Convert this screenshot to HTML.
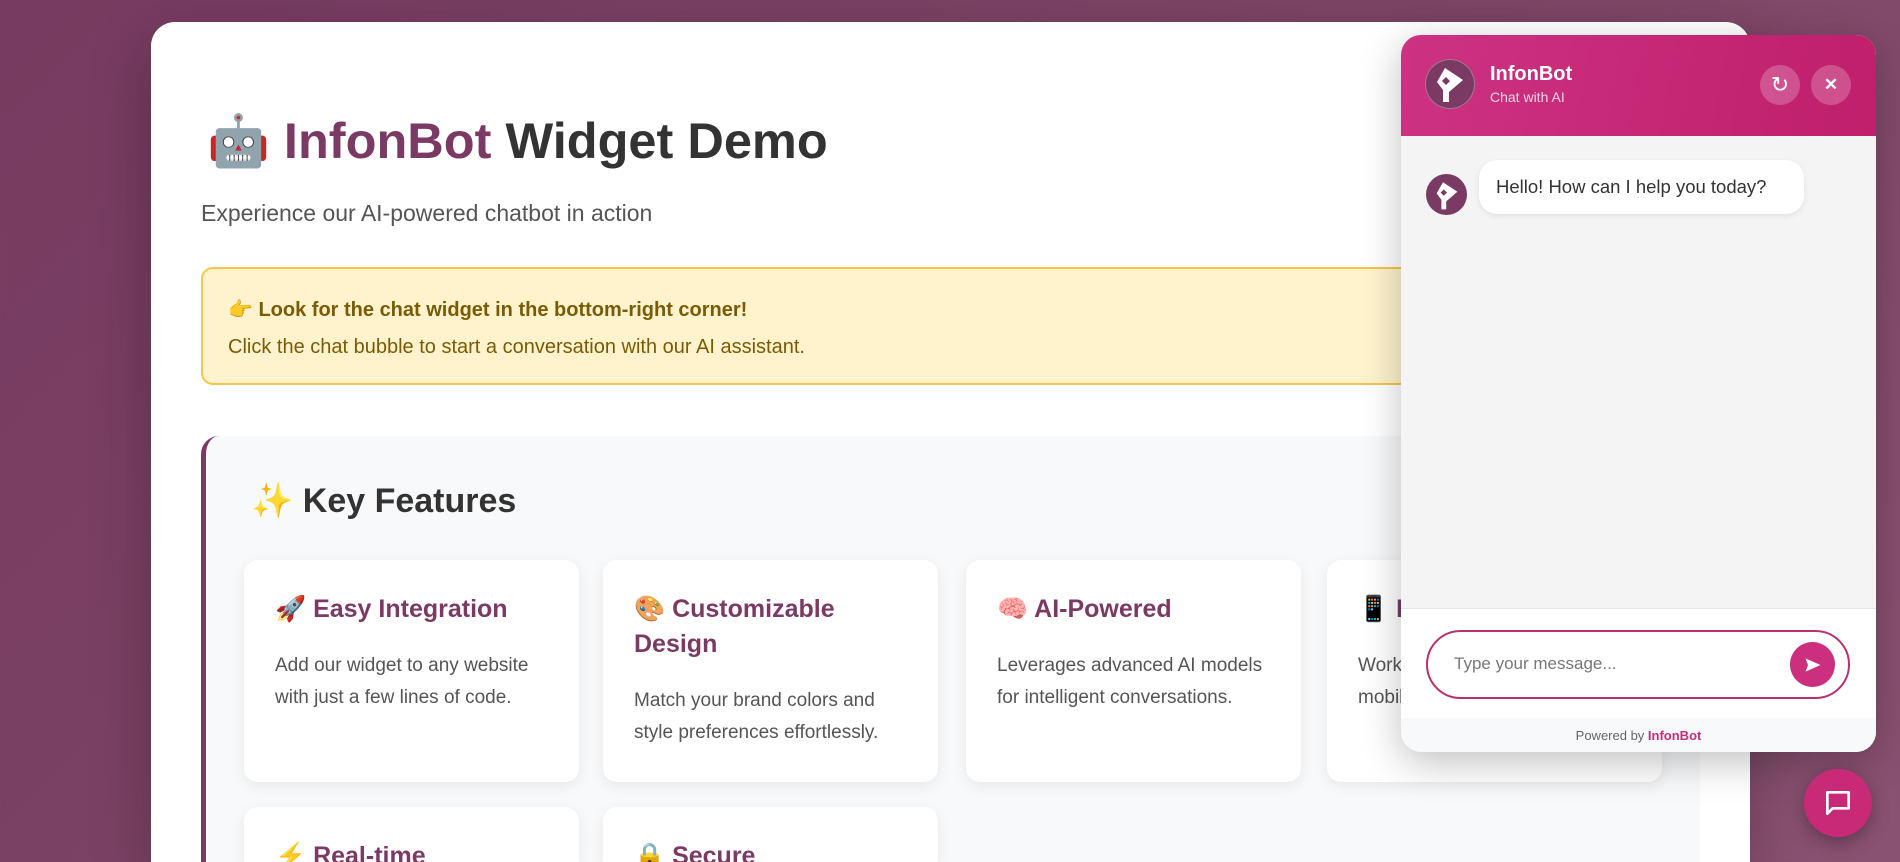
<!DOCTYPE html>
<html><head><meta charset="utf-8"><style>
*{box-sizing:border-box;margin:0;padding:0}
html,body{width:1900px;height:862px;overflow:hidden}
body{background:linear-gradient(135deg,#773a60 0%,#7d4566 50%,#8a5272 100%);font-family:"Segoe UI","Liberation Sans",sans-serif;position:relative}
.card{position:absolute;left:151px;top:22px;width:1599px;height:840px;background:#fff;border-radius:24px 24px 0 0;box-shadow:0 20px 60px rgba(0,0,0,.25);overflow:hidden}
h1{position:absolute;left:207px;top:111px;font-size:50.5px;font-weight:bold;color:#333;white-space:nowrap;font-family:"Liberation Sans",sans-serif}
h1 .b{color:#7b3a64}
.sub{position:absolute;left:201px;top:200px;font-size:23px;color:#555}
.note{position:absolute;left:201px;top:267px;width:1499px;height:118px;background:#fff3cd;border:2px solid #f2c649;border-radius:12px}
.note .t1{position:absolute;left:25px;top:28px;font-size:20px;font-weight:bold;color:#7a5b05}
.note .t2{position:absolute;left:25px;top:67px;font-size:20px;color:#7a5b05}
.feat{position:absolute;left:201px;top:436px;width:1499px;height:426px;background:#f8f9fa;border-left:5px solid #7b3a64;border-radius:18px 18px 0 0}
.feat h2{position:absolute;left:45px;top:45px;font-size:34px;font-weight:bold;color:#333}
.fc{position:absolute;width:335px;height:222px;background:#fff;border-radius:14px;box-shadow:0 4px 14px rgba(0,0,0,.07)}
.fc.r2{height:55px;border-radius:14px 14px 0 0}
.fc h3{position:absolute;left:31px;top:32px;width:290px;font-size:25px;line-height:35px;font-weight:bold;color:#7b3a64}
.fc p{position:absolute;left:31px;width:270px;font-size:19px;line-height:32px;color:#555}
.w{position:absolute;left:1401px;top:35px;width:475px;height:717px;border-radius:20px;background:#f4f4f5;box-shadow:0 10px 40px rgba(0,0,0,.25);overflow:hidden;font-family:"Liberation Sans",sans-serif}
.hd{position:absolute;left:0;top:0;width:475px;height:101px;background:linear-gradient(100deg,#cd3282,#bf1f6c)}
.av{position:absolute;border-radius:50%;background:#7b3a64;display:flex;align-items:center;justify-content:center}
.btn{position:absolute;width:40px;height:40px;border-radius:50%;background:rgba(255,255,255,.22);color:#fff;display:flex;align-items:center;justify-content:center;font-weight:bold}
.bub{position:absolute;left:78px;top:125px;width:325px;height:54px;background:#fff;border-radius:18px;box-shadow:0 2px 6px rgba(0,0,0,.08);font-size:18.5px;color:#333;padding:16px 0 0 17px}
.ia{position:absolute;left:0;top:573px;width:475px;height:110px;background:#fff;border-top:1px solid #e6e6e6}
.inp{position:absolute;left:25px;top:21px;width:424px;height:69px;border:2px solid #b8306e;border-radius:35px}
.inp span{position:absolute;left:26px;top:22px;font-size:17px;color:#777}
.send{position:absolute;right:13px;top:10px;width:45px;height:45px;border-radius:50%;background:#cc2f7d;display:flex;align-items:center;justify-content:center}
.ft{position:absolute;left:0;top:683px;width:475px;height:34px;background:#f8f9fa;text-align:center;font-size:13px;color:#666;padding-top:10px}
.fab{position:absolute;left:1804px;top:769px;width:68px;height:68px;border-radius:50%;background:#c92a77;box-shadow:0 6px 18px rgba(0,0,0,.3);display:flex;align-items:center;justify-content:center}
</style></head><body>
<div class="card"></div>
<h1>🤖 <span class="b">InfonBot</span> Widget Demo</h1>
<div class="sub">Experience our AI-powered chatbot in action</div>
<div class="note"><div class="t1">👉 Look for the chat widget in the bottom-right corner!</div><div class="t2">Click the chat bubble to start a conversation with our AI assistant.</div></div>
<div class="feat"><h2>✨ Key Features</h2></div>
<div class="fc" style="left:244px;top:560px"><h3>🚀 Easy Integration</h3><p style="top:90px;width:290px">Add our widget to any website with just a few lines of code.</p></div>
<div class="fc" style="left:603px;top:560px"><h3>🎨 Customizable Design</h3><p style="top:125px;width:262px">Match your brand colors and style preferences effortlessly.</p></div>
<div class="fc" style="left:966px;top:560px"><h3>🧠 AI-Powered</h3><p style="top:90px;width:280px">Leverages advanced AI models for intelligent conversations.</p></div>
<div class="fc" style="left:1327px;top:560px"><h3>📱 Responsive</h3><p style="top:90px;width:290px">Works on desktop, tablets and mobile devices.</p></div>
<div class="fc r2" style="left:244px;top:807px"><h3>⚡ Real-time</h3></div>
<div class="fc r2" style="left:603px;top:807px"><h3>🔒 Secure</h3></div>
<div class="w">
 <div class="hd">
  <div class="av" style="left:24px;top:24px;width:50px;height:50px;border:1px solid rgba(255,255,255,.3)"><svg width="30" height="36" viewBox="0 0 30 36"><path d="M10 2 L28 14 L14 26 L14 36 L8 36 L8 24 L2 16 Z M11 11 L7 15 L11 19 L15 15 Z" fill="#fff" fill-rule="evenodd"/></svg></div>
  <div style="position:absolute;left:89px;top:28px;color:#fff;font-size:20px;font-weight:bold">InfonBot</div>
  <div style="position:absolute;left:89px;top:54px;color:#f3d3e3;font-size:14px">Chat with AI</div>
  <div class="btn" style="left:359px;top:30px;font-size:22px;font-weight:normal">↻</div>
  <div class="btn" style="left:410px;top:30px;font-size:17px">✕</div>
 </div>
 <div class="av" style="left:25px;top:139px;width:41px;height:41px"><svg width="24" height="30" viewBox="0 0 30 36"><path d="M10 2 L28 14 L14 26 L14 36 L8 36 L8 24 L2 16 Z M11 11 L7 15 L11 19 L15 15 Z" fill="#fff" fill-rule="evenodd"/></svg></div>
 <div class="bub">Hello! How can I help you today?</div>
 <div class="ia"><div class="inp"><span>Type your message...</span><div class="send"><svg width="20" height="20" viewBox="0 0 24 24"><path d="M3 4 L21 12 L3 20 L6 12 Z" fill="#fff"/></svg></div></div></div>
 <div class="ft">Powered by <b style="color:#c2307a">InfonBot</b></div>
</div>
<div class="fab"><svg width="32" height="32" viewBox="0 0 24 24"><path d="M4 4 H20 V16 H8 L4 20 Z" fill="none" stroke="#fff" stroke-width="2" stroke-linejoin="round"/></svg></div>
</body></html>
